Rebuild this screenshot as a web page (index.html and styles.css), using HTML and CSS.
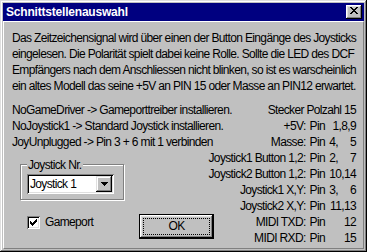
FILE: index.html
```html
<!DOCTYPE html>
<html lang="de">
<head>
  <meta charset="UTF-8">
  <title>Schnittstellenauswahl</title>
  <link rel="stylesheet" href="styles.css">
</head>
<body>
  <div class="window">
    <div class="titlebar">
      <span class="title">Schnittstellenauswahl</span>
      <span class="close">
        <svg width="8" height="7" viewBox="0 0 8 7"><path d="M0 0h2v1h-2z M6 0h2v1h-2z M1 1h2v1h-2z M5 1h2v1h-2z M2 2h4v1h-4z M3 3h2v1h-2z M2 4h4v1h-4z M1 5h2v1h-2z M5 5h2v1h-2z M0 6h2v1h-2z M6 6h2v1h-2z" fill="#000"/></svg>
      </span>
    </div>

    <div class="panel">
      <p class="info">
        <span>Das Zeitzeichensignal wird über einen der Button Eingänge des Joysticks</span>
        <span>eingelesen. Die Polarität spielt dabei keine Rolle. Sollte die LED des DCF</span>
        <span>Empfängers nach dem Anschliessen nicht blinken, so ist es warscheinlich</span>
        <span>ein altes Modell das seine +5V an PIN 15 oder Masse an PIN12 erwartet.</span>
      </p>

      <div class="main">
        <div class="left">
          <ul class="hints">
            <li>NoGameDriver -&gt; Gameporttreiber installieren.</li>
            <li>NoJoystick1 -&gt; Standard Joystick installieren.</li>
            <li>JoyUnplugged -&gt; Pin 3 + 6 mit 1 verbinden</li>
          </ul>

          <div class="group">
            <span class="group-label">Joystick Nr.</span>
            <div class="combo">
              <span class="combo-text">Joystick 1</span>
              <span class="combo-btn">
                <svg width="7" height="4" viewBox="0 0 7 4"><path d="M0 0h7v1h-7z M1 1h5v1h-5z M2 2h3v1h-3z M3 3h1v1h-1z" fill="#000"/></svg>
              </span>
            </div>
          </div>

          <div class="actions">
            <label class="gameport">
              <span class="check">
                <svg width="7" height="7" viewBox="0 0 7 7"><path d="M6 0h1v1h-1z M5 1h2v1h-2z M0 2h1v1h-1z M4 2h3v1h-3z M0 3h2v1h-2z M3 3h3v1h-3z M0 4h5v1h-5z M1 5h3v1h-3z M2 6h1v1h-1z" fill="#000"/></svg>
              </span>
              Gameport
            </label>
            <button class="ok" type="button"><span class="focus">OK</span></button>
          </div>
        </div>

        <div class="pins">
          <div class="pins-head">Stecker Polzahl 15</div>
          <span class="pin-label">+5V:</span><span>Pin</span><span class="pin-val">1,8,9</span>
          <span class="pin-label">Masse:</span><span>Pin</span><span class="pin-val">4,&#8199;&#8199;5</span>
          <span class="pin-label">Joystick1 Button 1,2:</span><span>Pin</span><span class="pin-val">2,&#8199;&#8199;7</span>
          <span class="pin-label">Joystick2 Button 1,2:</span><span>Pin</span><span class="pin-val">10,14</span>
          <span class="pin-label">Joystick1 X,Y:</span><span>Pin</span><span class="pin-val">3,&#8199;&#8199;6</span>
          <span class="pin-label">Joystick2 X,Y:</span><span>Pin</span><span class="pin-val">11,13</span>
          <span class="pin-label">MIDI TXD:</span><span>Pin</span><span class="pin-val">12</span>
          <span class="pin-label">MIDI RXD:</span><span>Pin</span><span class="pin-val">15</span>
        </div>
      </div>
    </div>
  </div>
</body>
</html>
```

FILE: styles.css
```css
body {
  margin: 0;
  font-family: "Liberation Sans", Arial, sans-serif;
  font-size: 12px;
  line-height: 16px;
  letter-spacing: -0.65px;
  color: #000;
  background: #c0c0c0;
}
.window {
  width: 367px;
  height: 252px;
  box-sizing: border-box;
  padding: 3px;
  background: #c0c0c0;
  box-shadow: inset -1px -1px #000, inset 1px 1px #dfdfdf, inset -2px -2px #808080, inset 2px 2px #fff;
  display: flex;
  flex-direction: column;
}
.titlebar {
  height: 18px;
  background: #000080;
  color: #fff;
  display: flex;
  justify-content: space-between;
  align-items: flex-start;
  padding: 0 2px 0 3px;
}
.title {
  font-weight: bold;
  line-height: 18px;
  letter-spacing: -0.2px;
}
.close {
  width: 16px;
  height: 14px;
  margin-top: 2px;
  box-sizing: border-box;
  padding-top: 2px;
  background: #c0c0c0;
  box-shadow: inset -1px -1px #000, inset 1px 1px #fff, inset -2px -2px #808080, inset 2px 2px #dfdfdf;
  display: flex;
  justify-content: center;
  align-items: flex-start;
}
.close svg {
  display: block;
}
.panel {
  flex: 1;
  min-width: 0;
  border-top: 1px solid #fff;
  border-left: 1px solid #fff;
  border-right: 1px solid #808080;
  border-bottom: 1px solid #808080;
  padding: 8px 7px 0 8px;
}
.info {
  margin: 0;
}
.info span {
  display: block;
  white-space: nowrap;
}
.main {
  margin-top: 8px;
  display: grid;
  grid-template-columns: minmax(0, 1fr) auto;
}
.left {
  min-width: 0;
}
.hints {
  list-style: none;
  margin: 0;
  padding: 0;
  white-space: nowrap;
}
.group {
  position: relative;
  width: 104px;
  box-sizing: border-box;
  margin: 14px 0 0 8px;
  padding: 9px 9px 5px 6px;
  border: 1px solid #808080;
  box-shadow: inset 1px 1px #fff, 1px 1px #fff;
}
.group-label {
  position: absolute;
  top: -8px;
  left: 6px;
  padding: 0 1px;
  background: #c0c0c0;
}
.combo {
  width: 87px;
  height: 20px;
  box-sizing: border-box;
  background: #fff;
  box-shadow: inset 1px 1px #808080, inset -1px -1px #fff, inset 2px 2px #000, inset -2px -2px #dfdfdf;
  display: flex;
  justify-content: space-between;
  padding: 2px;
}
.combo-text {
  padding-left: 1px;
  line-height: 16px;
}
.combo-btn {
  width: 16px;
  height: 16px;
  box-sizing: border-box;
  background: #c0c0c0;
  box-shadow: inset -1px -1px #000, inset 1px 1px #dfdfdf, inset -2px -2px #808080, inset 2px 2px #fff;
  display: flex;
  justify-content: center;
  align-items: center;
}
.combo-btn svg {
  display: block;
}
.actions {
  margin-top: 14px;
  display: flex;
  align-items: flex-start;
}
.gameport {
  width: 112px;
  flex: none;
  margin-left: 15px;
  display: flex;
  align-items: flex-start;
  gap: 5px;
}
.check {
  width: 13px;
  height: 13px;
  margin-top: 2px;
  box-sizing: border-box;
  background: #fff;
  box-shadow: inset 1px 1px #808080, inset -1px -1px #fff, inset 2px 2px #000, inset -2px -2px #dfdfdf;
  padding: 3px;
}
.check svg {
  display: block;
}
.ok {
  appearance: none;
  flex: none;
  width: 75px;
  height: 25px;
  box-sizing: border-box;
  margin: 0;
  padding: 3px;
  border: 1px solid #000;
  background: #c0c0c0;
  box-shadow: inset -1px -1px #000, inset 1px 1px #fff, inset -2px -2px #808080, inset 2px 2px #dfdfdf;
  font: inherit;
  letter-spacing: inherit;
  color: #000;
}
.focus {
  display: block;
  height: 100%;
  box-sizing: border-box;
  border: 1px dotted #000;
  line-height: 15px;
  text-align: center;
}
.pins {
  display: grid;
  grid-template-columns: auto auto 27px;
  column-gap: 4px;
  white-space: pre;
}
.pins-head {
  grid-column: 1 / -1;
  justify-self: end;
}
.pin-label,
.pin-val {
  text-align: right;
}
```
